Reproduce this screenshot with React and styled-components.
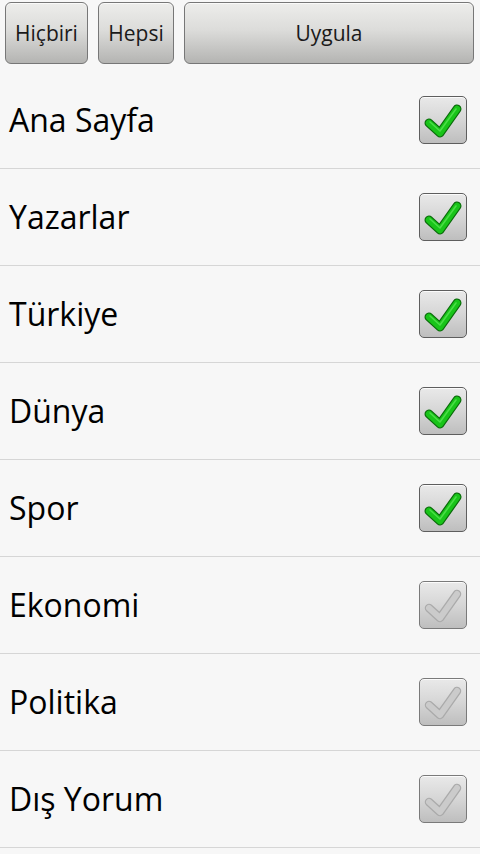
import React from "react";
import styled, { createGlobalStyle } from "styled-components";

const Global = createGlobalStyle`
  html, body { margin: 0; padding: 0; background: #f7f7f7; }
  body { font-family: "Open Sans", "Noto Sans", "DejaVu Sans", sans-serif; overflow: hidden; }
`;

const Page = styled.div`
  width: 480px;
  height: 854px;
  background: #f7f7f7;
  overflow: hidden;
`;

const Toolbar = styled.div`
  display: flex;
  gap: 10px;
  padding: 2px 6px 8px 5px;
  height: 72px;
  box-sizing: border-box;
`;

const Button = styled.button`
  flex: ${(p) => (p.$grow ? "1 1 auto" : "0 0 auto")};
  width: ${(p) => (p.$w ? p.$w + "px" : "auto")};
  height: 62px;
  border: 1px solid #777;
  border-radius: 6px;
  background: linear-gradient(#ededeb 0%, #dcdcda 45%, #c6c6c4 75%, #b4b4b2 100%);
  box-shadow: inset 0 1px 0 rgba(255,255,255,0.7);
  font-family: "Open Sans", "Noto Sans", sans-serif;
  font-size: 21px;
  color: #1a1a1a;
  padding: 0;
  display: flex;
  align-items: center;
  justify-content: center;
`;

const List = styled.div`
  display: flex;
  flex-direction: column;
`;

const Row = styled.div`
  height: 96px;
  border-bottom: 1px solid #d6d6d6;
  display: flex;
  align-items: center;
  justify-content: space-between;
  padding: 0 13px 0 9px;
  flex-shrink: 0;
`;

const Label = styled.span`
  font-size: 32px;
  color: #000;
  line-height: 1;
`;

const Box = styled.div`
  width: 46px;
  height: 46px;
  border: 1px solid ${(p) => (p.$on ? "#5e5e5e" : "#7a7a7a")};
  border-radius: 5px;
  background: linear-gradient(#e9e9e9 0%, #d6d6d6 50%, #bebebe 100%);
  box-shadow: inset 0 1px 0 rgba(255,255,255,0.8);
  display: flex;
  align-items: center;
  justify-content: center;
`;

const Check = ({ on }) => (
  <svg width="46" height="46" viewBox="0 0 46 46">
    {on ? (
      <>
        <path d="M9 26 L20 36 L37 12" fill="none" stroke="#0a6a0a" strokeWidth="9" strokeLinecap="round" strokeLinejoin="round" />
        <path d="M9 26 L20 36 L37 12" fill="none" stroke="#19c419" strokeWidth="6.5" strokeLinecap="round" strokeLinejoin="round" />
        <path d="M10 25 L20 34 L36 12" fill="none" stroke="#5fe85a" strokeWidth="1.6" strokeLinecap="round" strokeLinejoin="round" opacity="0.7" />
      </>
    ) : (
      <>
        <path d="M9 26 L20 36 L37 12" fill="none" stroke="#aaaaaa" strokeWidth="8.5" strokeLinecap="round" strokeLinejoin="round" />
        <path d="M9 26 L20 36 L37 12" fill="none" stroke="#cbcbcb" strokeWidth="6" strokeLinecap="round" strokeLinejoin="round" />
      </>
    )}
  </svg>
);

const items = [
  ["Ana Sayfa", true],
  ["Yazarlar", true],
  ["Türkiye", true],
  ["Dünya", true],
  ["Spor", true],
  ["Ekonomi", false],
  ["Politika", false],
  ["Dış Yorum", false],
];

export default function App() {
  return (
    <Page>
      <Global />
      <Toolbar>
        <Button $w={83}>Hiçbiri</Button>
        <Button $w={76}>Hepsi</Button>
        <Button $grow>Uygula</Button>
      </Toolbar>
      <List>
        {items.map(([name, on]) => (
          <Row key={name}>
            <Label>{name}</Label>
            <Box $on={on}>
              <Check on={on} />
            </Box>
          </Row>
        ))}
      </List>
    </Page>
  );
}
